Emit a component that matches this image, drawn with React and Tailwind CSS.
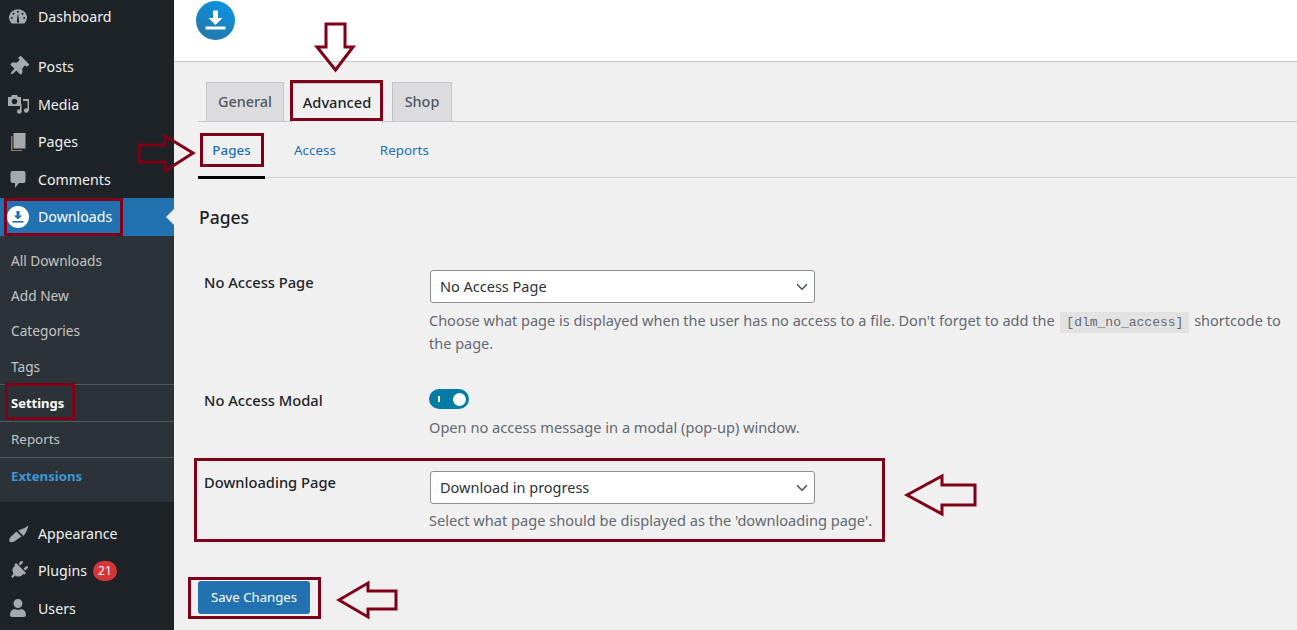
import { FaThumbtack, FaPlug, FaUser } from 'react-icons/fa';
import { ChevronDown } from 'lucide-react';

function DashIcon() {
  return (
    <svg viewBox="0 0 20 20" className="h-[20px] w-[20px]" fill="currentColor">
      <path d="M3.800 16.500C2.300 15 1 13 1 10.800 1 6 5 2.300 10 2.300s9 3.700 9 8.500c0 2.200-1.300 4.200-2.800 5.700H3.800z" />
      <circle cx="10" cy="4.800" r="1" fill="#1d2327" />
      <circle cx="5.500" cy="6.800" r="1" fill="#1d2327" />
      <circle cx="14.500" cy="6.800" r="1" fill="#1d2327" />
      <circle cx="3.800" cy="11" r="1" fill="#1d2327" />
      <circle cx="16.200" cy="11" r="1" fill="#1d2327" />
      <path d="M8.800 14.500 9.700 7.500h.6l.9 7a1.200 1.200 0 0 1-2.400 0z" fill="#1d2327" />
    </svg>
  );
}

function MediaIcon() {
  return (
    <svg viewBox="0 0 21 20" className="h-[20px] w-[21px]" fill="currentColor">
      <path d="M0 3h3l1-2h5l1 2h3v9H0V3zm6.500 1.800a2.700 2.700 0 1 0 0 5.400 2.700 2.700 0 0 0 0-5.400z" fillRule="evenodd" />
      <path d="M15 5h6v12h-1.500V7H15z" />
      <path d="M12 10h1.500v7.500H12z" />
      <circle cx="11.300" cy="17.500" r="2.300" />
      <circle cx="18.200" cy="16.500" r="2.300" />
    </svg>
  );
}

function PagesIcon() {
  return (
    <svg viewBox="0 0 20 20" className="h-[20px] w-[20px]" fill="currentColor">
      <path d="M5.500 1h12v15.500h-12z" />
      <path d="M3 4h1.500v14h9.500v1H3z" fill="#8c7f66" />
    </svg>
  );
}

function CommentIcon() {
  return (
    <svg viewBox="0 0 20 20" className="h-[20px] w-[20px]" fill="currentColor">
      <path d="M4.500 2h11a2 2 0 0 1 2 2v8a2 2 0 0 1-2 2H11l-4 5v-5H4.500a2 2 0 0 1-2-2V4a2 2 0 0 1 2-2z" />
    </svg>
  );
}

function BrushIcon() {
  return (
    <svg viewBox="0 0 21 20" className="h-[20px] w-[21px]" fill="currentColor">
      <path d="M10 7.500c3.500-1 7.500-3 10.500-5-.8 3.500-3 8-5 10.500z" />
      <path d="M8.500 8.500 13.500 13.500 7 18c-2 1.300-4.500 1.500-5.300.8C1 18 1 16 2.500 14z" />
    </svg>
  );
}

function DownloadBadge() {
  return (
    <svg viewBox="0 0 22 22" className="h-[22px] w-[22px]">
      <circle cx="11" cy="11" r="11" fill="#fff" />
      <path d="M9.500 5h3v4.500h2.700L11 13.500 6.800 9.500h2.700z" fill="#2271b1" />
      <path d="M5.500 15h11v1.600h-11z" fill="#2271b1" />
    </svg>
  );
}

function Logo() {
  return (
    <svg viewBox="0 0 39 39" className="h-[39px] w-[39px]">
      <defs>
        <linearGradient id="logoFill" x1="0.9" y1="0" x2="0.3" y2="1">
          <stop offset="0" stopColor="#0a94e6" />
          <stop offset="1" stopColor="#2478ab" />
        </linearGradient>
      </defs>
      <circle cx="19.500" cy="19.500" r="19.500" fill="url(#logoFill)" />
      <path d="M17 9.500h5v7.500h4.500l-7 7-7-7H17z" fill="#fff" />
      <path d="M9.500 25.500h20v3h-20z" fill="#fff" />
    </svg>
  );
}

function MenuItem({ icon, label, badge }) {
  return (
    <div className="flex h-[37.5px] items-center text-[14.2px] text-[#f0f0f1]">
      <span className="flex w-[38px] justify-center pr-[2px] text-[#a7aaad]">{icon}</span>
      <span>{label}</span>
      {badge ? (
        <span className="ml-[6px] flex h-[20px] w-[24px] items-center justify-center rounded-full bg-[#d63638] text-[12px] text-white">{badge}</span>
      ) : null}
    </div>
  );
}

function SubItem({ children, className }) {
  return <div className={`flex items-center pl-[11px] ${className}`}>{children}</div>;
}

function Tab({ children, active, className }) {
  return (
    <div
      className={
        active
          ? `relative top-[1px] -mb-[1px] flex h-[40px] items-center justify-center border border-b-0 border-[#c3c4c7] bg-[#f0f0f0] pb-[2px] text-[14.6px] font-medium text-[#1d2327] ${className}`
          : `flex h-[39px] items-center justify-center border border-b-0 border-[#c3c4c7] bg-[#dcdcde] text-[14.4px] font-medium text-[#50575e] ${className}`
      }
    >
      {children}
    </div>
  );
}

function Select({ value }) {
  return (
    <div className="ml-[1px] flex h-[33px] w-[385px] items-center justify-between rounded-[3px] border border-[#8c8f94] bg-white pl-[9px] pr-[3px] text-[14.5px] text-[#2c3338]">
      <span>{value}</span>
      <ChevronDown className="h-[18px] w-[18px] text-[#50575e]" strokeWidth={2.2} />
    </div>
  );
}

function Box({ className }) {
  return <div className={`absolute border-[3px] border-[#7f0019] ${className}`} />;
}

function Arrow({ className, box, points }) {
  return (
    <svg viewBox={box} className={`absolute ${className}`}>
      <polygon points={points} fill="none" stroke="#7f0019" strokeWidth="3" />
    </svg>
  );
}

export default function App() {
  return (
    <div className="relative flex h-[630px] w-[1297px] overflow-hidden bg-[#f0f0f0] font-['Noto_Sans',sans-serif]">
      <aside className="w-[174px] shrink-0 bg-[#1d2327]">
        <div className="mb-[15px] flex h-[33px] items-center text-[14.2px] text-[#f0f0f1]">
          <span className="flex w-[38px] justify-center pr-[2px] text-[#a7aaad]"><DashIcon /></span>
          <span>Dashboard</span>
        </div>
        <MenuItem icon={<FaThumbtack className="h-[20px] w-[20px] rotate-45" />} label="Posts" />
        <MenuItem icon={<MediaIcon />} label="Media" />
        <MenuItem icon={<PagesIcon />} label="Pages" />
        <MenuItem icon={<CommentIcon />} label="Comments" />
        <div className="relative flex h-[37.5px] items-center bg-[#2271b1] text-[14.2px] text-white">
          <span className="flex w-[38px] justify-center pl-[1px] pr-[3px]"><DownloadBadge /></span>
          <span>Downloads</span>
          <span className="absolute right-0 top-[11px] h-0 w-0 border-y-[8px] border-r-[8px] border-y-transparent border-r-[#f0f0f0]" />
        </div>
        <div className="bg-[#2c3338] pb-[8px] pt-[7px]">
          <SubItem className="h-[35.5px] pt-[2px] text-[13.7px] text-[#c3c4c7]">All Downloads</SubItem>
          <SubItem className="h-[35px] pt-[2px] text-[13.7px] text-[#c3c4c7]">Add New</SubItem>
          <SubItem className="h-[35.5px] pt-[2px] text-[13.7px] text-[#c3c4c7]">Categories</SubItem>
          <SubItem className="h-[35px] pt-[3px] text-[13.7px] text-[#c3c4c7]">Tags</SubItem>
          <SubItem className="h-[37px] border-t border-[#50575e] pt-[2px] text-[13px] font-bold text-white">Settings</SubItem>
          <SubItem className="h-[36px] border-t border-[#50575e] pt-[1px] text-[13.4px] text-[#c3c4c7]">Reports</SubItem>
          <SubItem className="h-[37px] border-t border-[#50575e] pt-[2px] text-[13.2px] font-bold text-[#3f97d6]">Extensions</SubItem>
        </div>
        <div className="mt-[13px]">
          <MenuItem icon={<BrushIcon />} label="Appearance" />
          <MenuItem icon={<FaPlug className="h-[19px] w-[19px] rotate-45" />} label="Plugins" badge="21" />
          <MenuItem icon={<FaUser className="h-[18px] w-[18px]" />} label="Users" />
        </div>
      </aside>

      <main className="min-w-0 flex-1">
        <header className="h-[62px] border-b border-[#c8c8c8] bg-white pl-[22px] pt-[1px]">
          <Logo />
        </header>

        <div className="pl-[24px]">
          <div className="flex h-[60px] items-end border-b border-[#c8c8c8] pl-[8px]">
            <Tab className="mr-[7px] w-[78px]">General</Tab>
            <Tab active className="mr-[9px] w-[92px]">Advanced</Tab>
            <Tab className="w-[60px]">Shop</Tab>
          </div>

          <div className="flex h-[56px] border-b border-[#d8d8d8] text-[13.4px] text-[#2271b1]">
            <div className="flex h-[57px] w-[67px] items-center justify-center border-b-[3px] border-black pt-[3px] font-medium">Pages</div>
            <div className="ml-[29px] flex items-center pt-[1px]">Access</div>
            <div className="ml-[44px] flex items-center pt-[1px]">Reports</div>
          </div>

          <h2 className="mt-[26px] pl-[1px] text-[17.5px] font-medium leading-[26px] text-[#1d2327]">Pages</h2>

          <div className="mt-[40px] flex">
            <div className="w-[231px] pl-[6px] pt-[2px] text-[14.7px] font-medium leading-[20px] text-[#1d2327]">No Access Page</div>
            <div>
              <Select value="No Access Page" />
              <p className="mt-[6px] w-[860px] text-[14.5px] leading-[23px] text-[#646970]">
                Choose what page is displayed when the user has no access to a file. Don't forget to add the{' '}
                <code className="ml-[2px] mr-[1px] bg-[#e2e2e2] px-[6px] py-[3px] font-['Liberation_Mono',monospace] text-[13px] leading-none">[dlm_no_access]</code>{' '}
                shortcode to the page.
              </p>
            </div>
          </div>

          <div className="mt-[34px] flex">
            <div className="w-[231px] pl-[6px] pt-[1px] text-[14.7px] font-medium leading-[20px] text-[#1d2327]">No Access Modal</div>
            <div>
              <div className="flex h-[20px] w-[40px] items-center justify-between rounded-full bg-[#007ca5] pl-[9px] pr-[3px]">
                <span className="h-[6px] w-[2px] bg-white" />
                <span className="h-[13px] w-[13px] rounded-full bg-white" />
              </div>
              <p className="mt-[7px] text-[14.6px] leading-[23px] text-[#646970]">Open no access message in a modal (pop-up) window.</p>
            </div>
          </div>

          <div className="mt-[32px] flex">
            <div className="w-[231px] pl-[6px] text-[14.7px] font-medium leading-[22px] text-[#1d2327]">Downloading Page</div>
            <div>
              <Select value="Download in progress" />
              <p className="mt-[5px] text-[14.6px] leading-[23px] text-[#646970]">Select what page should be displayed as the 'downloading page'.</p>
            </div>
          </div>

          <button type="button" className="mt-[49px] h-[33px] w-[112px] rounded-[3px] bg-[#2271b1] text-[13.2px] text-white">Save Changes</button>
        </div>
      </main>

      <Box className="left-[4px] top-[198px] h-[38px] w-[119px]" />
      <Box className="left-[5px] top-[383px] h-[37px] w-[70px]" />
      <Box className="left-[290px] top-[80px] h-[41px] w-[93px]" />
      <Box className="left-[200px] top-[133px] h-[34px] w-[64px]" />
      <Box className="left-[194px] top-[458px] h-[84px] w-[691px]" />
      <Box className="left-[188px] top-[577px] h-[42px] w-[133px]" />

      <Arrow className="left-[310px] top-[20px] h-[54px] w-[50px]" box="0 0 50 54" points="16,4 35,4 35,27 43,27 25.500,50 7,27 16,27" />
      <Arrow className="left-[134px] top-[132px] h-[44px] w-[64px]" box="0 0 64 44" points="5,13 31,13 31,4 59,21 31,39 31,30 5,30" />
      <Arrow className="left-[903px] top-[472px] h-[46px] w-[78px]" box="0 0 78 46" points="4,23 39,4 39,13 72,13 72,33 39,33 39,42" />
      <Arrow className="left-[335px] top-[579px] h-[42px] w-[66px]" box="0 0 66 42" points="4,21 33,4 33,12 61,12 61,30 33,30 33,38" />
    </div>
  );
}
